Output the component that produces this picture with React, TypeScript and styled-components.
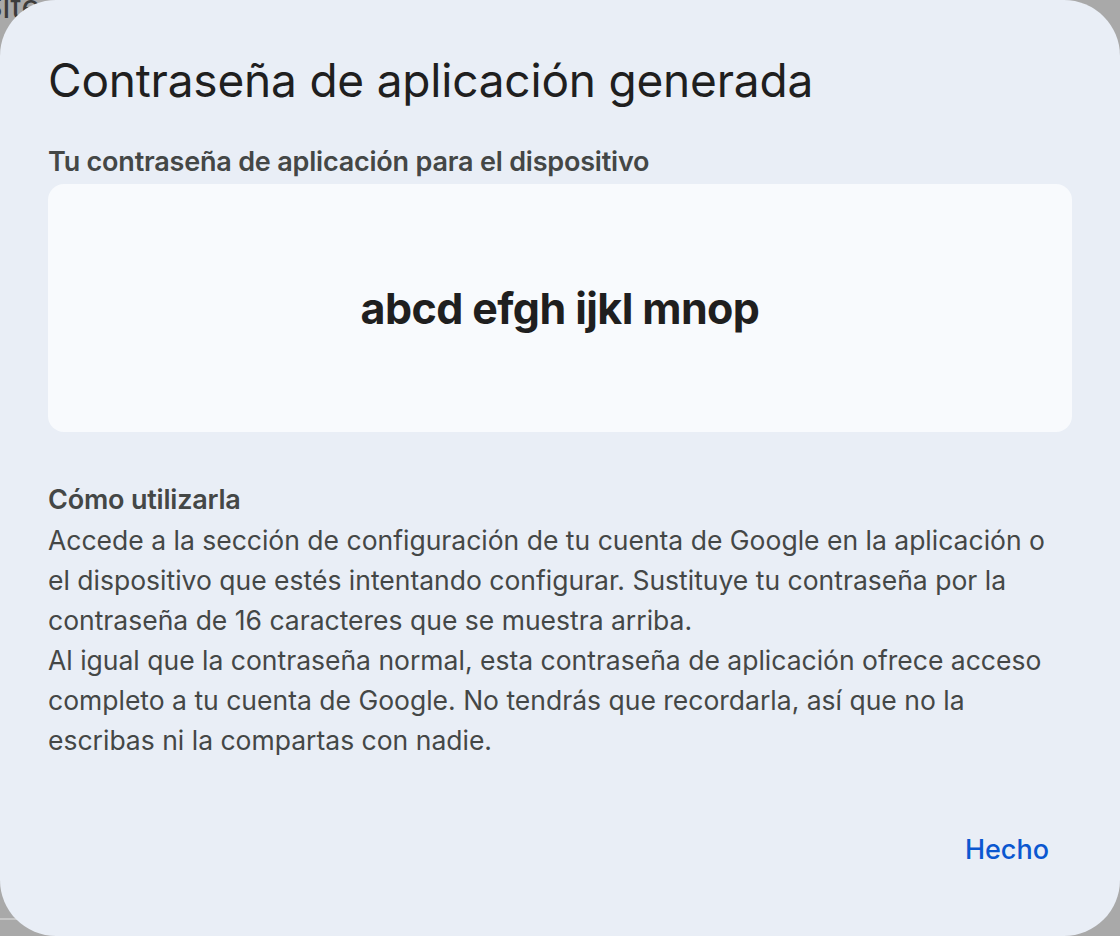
import React from "react";
import styled, { createGlobalStyle } from "styled-components";

const Global = createGlobalStyle`
  html, body { margin: 0; padding: 0; }
  body {
    width: 1120px;
    height: 936px;
    overflow: hidden;
    background: #a8a8a8;
    font-family: Inter, Roboto, "Noto Sans", Arial, sans-serif;
  }
`;

const Backdrop = styled.div`
  position: relative;
  width: 1120px;
  height: 936px;
  background: #a9a9a9;
  overflow: hidden;
`;

const BackText = styled.span`
  position: absolute;
  left: -18px;
  top: -14px;
  font-size: 34px;
  color: #3c3c3c;
  font-family: Roboto, Arial, sans-serif;
`;

const BackLine = styled.div`
  position: absolute;
  left: 0;
  top: 918px;
  width: 60px;
  height: 2px;
  background: #c6c6c6;
`;

const Dialog = styled.div`
  position: absolute;
  inset: 0;
  background: #e9eef6;
  border-radius: 56px;
  padding: 48px 48px 0 48px;
  box-sizing: border-box;
  display: flex;
  flex-direction: column;
`;

const Title = styled.h1`
  margin: 0;
  font-size: 46px;
  line-height: 64px;
  font-weight: 400;
  letter-spacing: -0.2px;
  color: #1f1f1f;
`;

const Label = styled.h2`
  margin: 0;
  margin-top: 34px;
  font-size: 27px;
  line-height: 32px;
  font-weight: 600;
  letter-spacing: -0.2px;
  color: #444746;
`;

const PasswordBox = styled.div`
  margin-top: 6px;
  height: 248px;
  border-radius: 16px;
  background: #f8fafd;
  display: flex;
  align-items: center;
  justify-content: center;
`;

const Password = styled.span`
  font-size: 43px;
  font-weight: 700;
  letter-spacing: -0.6px;
  color: #1f1f1f;
`;

const Section = styled.div`
  margin-top: 52px;
  display: flex;
  flex-direction: column;
`;

const SectionTitle = styled.h3`
  margin: 0;
  font-size: 27px;
  line-height: 32px;
  font-weight: 600;
  letter-spacing: -0.2px;
  color: #444746;
`;

const Body = styled.p`
  margin: 4px 0 0;
  font-size: 26.5px;
  line-height: 40px;
  font-weight: 400;
  color: #444746;
  white-space: nowrap;
`;

const Footer = styled.div`
  margin-top: auto;
  margin-bottom: 62px;
  display: flex;
  justify-content: flex-end;
`;

const TextButton = styled.button`
  border: none;
  background: transparent;
  font-family: inherit;
  font-size: 27px;
  font-weight: 500;
  color: #0b57d0;
  padding: 8px 23px 8px 24px;
  cursor: pointer;
`;

export default function App() {
  return (
    <>
      <Global />
      <Backdrop>
        <BackText>Site</BackText>
        <BackLine />
        <Dialog>
          <Title>Contraseña de aplicación generada</Title>
          <Label>Tu contraseña de aplicación para el dispositivo</Label>
          <PasswordBox>
            <Password>abcd efgh ijkl mnop</Password>
          </PasswordBox>
          <Section>
            <SectionTitle>Cómo utilizarla</SectionTitle>
            <Body>
              Accede a la sección de configuración de tu cuenta de Google en la aplicación o
              <br />
              el dispositivo que estés intentando configurar. Sustituye tu contraseña por la
              <br />
              contraseña de 16 caracteres que se muestra arriba.
              <br />
              Al igual que la contraseña normal, esta contraseña de aplicación ofrece acceso
              <br />
              completo a tu cuenta de Google. No tendrás que recordarla, así que no la
              <br />
              escribas ni la compartas con nadie.
            </Body>
          </Section>
          <Footer>
            <TextButton>Hecho</TextButton>
          </Footer>
        </Dialog>
      </Backdrop>
    </>
  );
}
